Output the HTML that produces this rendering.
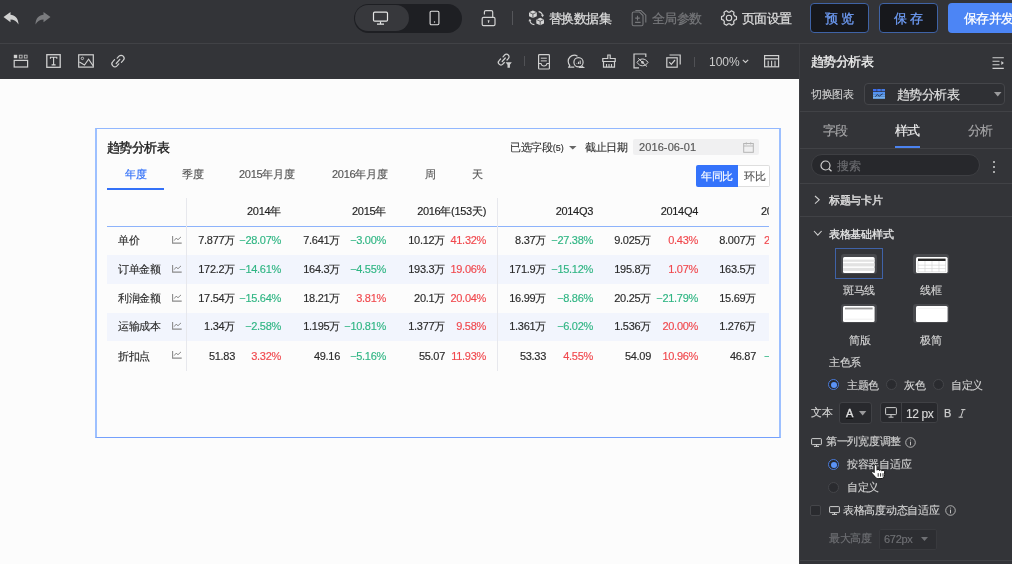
<!DOCTYPE html>
<html><head><meta charset="utf-8"><title>趋势分析表</title><style>
html,body{margin:0;padding:0;}
body{width:1012px;height:564px;position:relative;overflow:hidden;background:#333438;font-family:"Liberation Sans",sans-serif;}
.t{position:absolute;white-space:nowrap;line-height:1;will-change:transform;-webkit-text-stroke:0.15px currentColor;}
.b{position:absolute;}
svg.b{overflow:visible;}
</style></head><body>
<div class="b" style="left:0px;top:0px;width:1012px;height:43px;background:#333438"></div>
<div class="b" style="left:0px;top:43px;width:1012px;height:1px;background:#414246"></div>
<div class="b" style="left:0px;top:44px;width:800px;height:35px;background:#333438"></div>
<div class="b" style="left:0px;top:79px;width:799px;height:485px;background:#fcfcfc"></div>
<div class="b" style="left:799px;top:44px;width:1px;height:520px;background:#3c3d41"></div>
<div class="b" style="left:800px;top:44px;width:212px;height:520px;background:#333438"></div>
<svg class="b" style="left:3px;top:12px;" width="16" height="13" viewBox="0 0 16 13" fill="none"><path d="M0.5 5 L7.5 0 L7.5 2.8 C11.5 3 15.5 6 15.5 12.5 C13.5 9 11 7.6 7.5 7.6 L7.5 10.2 Z" fill="#d0d0d0"/></svg>
<svg class="b" style="left:35px;top:12px;" width="16" height="13" viewBox="0 0 16 13" fill="none"><g transform="translate(16 0) scale(-1 1)"><path d="M0.5 5 L7.5 0 L7.5 2.8 C11.5 3 15.5 6 15.5 12.5 C13.5 9 11 7.6 7.5 7.6 L7.5 10.2 Z" fill="#7b7c7f"/></g></svg>
<div class="b" style="left:353.5px;top:3.5px;width:108px;height:29px;background:#1e1f23;border-radius:14.5px"></div>
<div class="b" style="left:355px;top:5px;width:54px;height:26px;background:#37383c;border-radius:13px"></div>
<svg class="b" style="left:372px;top:11px;" width="17" height="14" viewBox="0 0 17 14" fill="none"><rect x="1.5" y="1.2" width="14" height="9" rx="1.2" stroke="#e6e6e6" stroke-width="1.2"/><path d="M8.5 10.5V13 M5 13.2H12" stroke="#e6e6e6" stroke-width="1.2"/></svg>
<svg class="b" style="left:429px;top:10px;" width="11" height="16" viewBox="0 0 11 16" fill="none"><rect x="1.1" y="1.2" width="8.8" height="13.6" rx="1.2" stroke="#e0e0e0" stroke-width="1.1"/><circle cx="5.5" cy="12" r="0.7" fill="#e0e0e0"/></svg>
<svg class="b" style="left:481px;top:10px;" width="15" height="16" viewBox="0 0 15 16" fill="none"><path d="M3.4 4.6 V2.1 Q3.4 0.7 4.8 0.7 H10.3 Q11.7 0.7 11.7 2.1 V7.2" stroke="#d2d2d2" stroke-width="1.2"/><rect x="1.2" y="7.4" width="12.8" height="8.2" rx="1.3" stroke="#d2d2d2" stroke-width="1.2"/><path d="M6.6 10.3 H8.6 L7.9 12.9 H7.3 Z" fill="#d2d2d2"/></svg>
<div class="b" style="left:512px;top:11px;width:1px;height:14px;background:#55565a"></div>
<svg class="b" style="left:528px;top:10px;" width="17" height="16" viewBox="0 0 17 16" fill="none"><path d="M4.9 0.5 L8.8 2.3 V6.2 L4.9 7.9 L1 6.2 V2.3Z" fill="#d6d6d6"/><path d="M1.3 2.4 L4.9 4 L8.5 2.4 M4.9 4 V7.7" stroke="#2a2b2f" stroke-width="0.7"/><path d="M12.2 7.8 L16 9.5 V13.4 L12.2 15.2 L8.3 13.4 V9.5Z" fill="#d6d6d6"/><path d="M8.6 9.6 L12.2 11.2 L15.7 9.6 M12.2 11.2 V15" stroke="#2a2b2f" stroke-width="0.7"/><path d="M10.6 1.6 C12.6 1.8 14 3.2 14.5 5.2" stroke="#d0d0d0" stroke-width="1.1"/><path d="M13 5 L14.7 7.2 L16 4.8Z" fill="#d0d0d0"/><path d="M6.4 14.6 C4.2 14.4 2.4 13 1.9 10.8" stroke="#d0d0d0" stroke-width="1.1"/><path d="M0.4 11.2 L1.8 8.8 L3.4 11Z" fill="#d0d0d0"/></svg>
<div class="t" style="left:549px;top:11.6px;font-size:13px;color:#dedede;font-weight:normal;letter-spacing:-0.6px;-webkit-text-stroke:0.25px #dedede">替换数据集</div>
<svg class="b" style="left:631px;top:10px;" width="16" height="16" viewBox="0 0 16 16" fill="none"><path d="M1.2 3.5 Q1.2 2 2.7 2 H8.5 L12 5.5 V14.3 Q12 15.8 10.5 15.8 H2.7 Q1.2 15.8 1.2 14.3 Z" stroke="#77787b" stroke-width="1.1"/><path d="M4.4 0.5 H10 L14.8 5.2 V12.6" stroke="#77787b" stroke-width="1.1"/><path d="M6.5 5.8V10.4 M4.2 8.1H8.8 M4.1 12.4H9.6" stroke="#77787b" stroke-width="1.1"/></svg>
<div class="t" style="left:652px;top:11.6px;font-size:13px;color:#77787b;font-weight:normal;letter-spacing:-0.6px;-webkit-text-stroke:0.2px #77787b">全局参数</div>
<svg class="b" style="left:721px;top:10px;" width="16" height="16" viewBox="0 0 16 16" fill="none"><path d="M15.46 6.55 L15.46 9.45 L13.51 10.11 L12.59 11.71 L12.99 13.74 L10.47 15.19 L8.92 13.83 L7.08 13.83 L5.53 15.19 L3.01 13.74 L3.41 11.71 L2.49 10.11 L0.54 9.45 L0.54 6.55 L2.49 5.89 L3.41 4.29 L3.01 2.26 L5.53 0.81 L7.08 2.17 L8.92 2.17 L10.47 0.81 L12.99 2.26 L12.59 4.29 L13.51 5.89 Z" stroke="#d8d8d8" stroke-width="1.2" stroke-linejoin="round"/><circle cx="8" cy="8" r="2.7" stroke="#d8d8d8" stroke-width="1.1"/></svg>
<div class="t" style="left:741.7px;top:11.6px;font-size:13px;color:#dedede;font-weight:normal;letter-spacing:-0.6px;-webkit-text-stroke:0.25px #dedede">页面设置</div>
<div class="b" style="left:810px;top:3px;width:59px;height:30px;box-sizing:border-box;background:#17181c;border:1px solid #3f63a6;border-radius:4px"></div>
<div class="t" style="left:825px;top:11.5px;font-size:13px;color:#6e9cf5;font-weight:normal;letter-spacing:-0.6px;letter-spacing:3px;-webkit-text-stroke:0.3px #6e9cf5">预览</div>
<div class="b" style="left:879px;top:3px;width:59px;height:30px;box-sizing:border-box;background:#17181c;border:1px solid #3f63a6;border-radius:4px"></div>
<div class="t" style="left:894.3px;top:11.5px;font-size:13px;color:#6e9cf5;font-weight:normal;letter-spacing:-0.6px;letter-spacing:3px;-webkit-text-stroke:0.3px #6e9cf5">保存</div>
<div class="b" style="left:948px;top:3px;width:80px;height:30px;background:#4c85f5;border-radius:4px"></div>
<div class="t" style="left:963.8px;top:11.5px;font-size:13px;color:#ffffff;font-weight:normal;letter-spacing:-0.6px;-webkit-text-stroke:0.3px #ffffff">保存并发布</div>
<svg class="b" style="left:13px;top:54px;" width="16" height="14" viewBox="0 0 16 14" fill="none"><rect x="0.8" y="0.8" width="3.4" height="3.4" fill="#d0d0d0"/><rect x="6.3" y="1.2" width="2.8" height="2.8" stroke="#bcbcbc" stroke-width="0.9"/><rect x="11.3" y="1.2" width="2.8" height="2.8" stroke="#bcbcbc" stroke-width="0.9"/><rect x="1.2" y="6.4" width="13.4" height="6.6" stroke="#d0d0d0" stroke-width="1.2"/></svg>
<svg class="b" style="left:46px;top:54px;" width="15" height="14" viewBox="0 0 15 14" fill="none"><rect x="0.8" y="0.7" width="13.4" height="12.6" stroke="#d0d0d0" stroke-width="1.3"/><path d="M4 3.3H11.2 M4.4 3V4.8 M10.8 3V4.8 M7.6 3.3V10.9 M5.6 10.9H9.6" stroke="#d8d8d8" stroke-width="1.1"/></svg>
<svg class="b" style="left:78px;top:54px;" width="16" height="14" viewBox="0 0 16 14" fill="none"><rect x="0.7" y="0.8" width="14.6" height="12.3" stroke="#d0d0d0" stroke-width="1.2"/><circle cx="4.4" cy="4.4" r="1.2" stroke="#d0d0d0" stroke-width="0.9"/><path d="M1.4 8 L6.5 11 L10.6 5.3 L15 11.6" stroke="#d0d0d0" stroke-width="1.1"/></svg>
<svg class="b" style="left:110px;top:54px;" width="16" height="14" viewBox="0 0 16 14" fill="none"><path d="M6.2 9.5 L9.8 5.3" stroke="#d0d0d0" stroke-width="1.2" stroke-linecap="round"/><path d="M7.2 4.2 L9 2.2 C10.2 1 12 1 13.2 2.2 C14.4 3.4 14.4 5.2 13.2 6.4 L11.4 8.4" stroke="#d0d0d0" stroke-width="1.2" stroke-linecap="round"/><path d="M8.8 9.8 L7 11.8 C5.8 13 4 13 2.8 11.8 C1.6 10.6 1.6 8.8 2.8 7.6 L4.6 5.6" stroke="#d0d0d0" stroke-width="1.2" stroke-linecap="round"/></svg>
<svg class="b" style="left:497px;top:53px;" width="16" height="15" viewBox="0 0 16 15" fill="none"><path d="M5.2 8.5 L8.3 5" stroke="#d0d0d0" stroke-width="1.2" stroke-linecap="round"/><path d="M6 3.8 L7.6 2 C8.7 0.9 10.3 0.9 11.3 2 C12.3 3 12.3 4.6 11.3 5.6 L10 7" stroke="#d0d0d0" stroke-width="1.2" stroke-linecap="round"/><path d="M7.3 9.5 L5.8 11.2 C4.8 12.3 3.2 12.3 2.1 11.2 C1.1 10.2 1.1 8.6 2.1 7.6 L3.6 6" stroke="#d0d0d0" stroke-width="1.2" stroke-linecap="round"/><path d="M8.6 9.2 H14.8 L12.9 11.8 V14.8 H10.5 V11.8 Z" fill="#d0d0d0"/></svg>
<div class="b" style="left:523.5px;top:56px;width:1px;height:10px;background:#505155"></div>
<svg class="b" style="left:538px;top:53.5px;" width="12" height="16" viewBox="0 0 12 16" fill="none"><rect x="0.6" y="0.6" width="10.8" height="14.4" rx="0.8" stroke="#d0d0d0" stroke-width="1.2"/><path d="M2.8 4.2H8.8 M2.8 6.9H8.8" stroke="#d0d0d0" stroke-width="1"/><path d="M0.8 9.5 H3 C3.3 11.3 4.3 12 6 12 C7.7 12 8.7 11.3 9 9.5 H11.2" stroke="#d0d0d0" stroke-width="1.1"/></svg>
<svg class="b" style="left:567px;top:54px;" width="18" height="14" viewBox="0 0 18 14" fill="none"><path d="M10.5 2.2 C9.6 1.6 8.5 1.2 7.3 1.2 C3.9 1.2 1.2 3.9 1.2 7.2 C1.2 8.8 1.8 10.2 2.8 11.3 L1.8 13.2 H7.3" stroke="#d0d0d0" stroke-width="1.2"/><circle cx="11.5" cy="8.2" r="4.6" stroke="#d0d0d0" stroke-width="1.2"/><path d="M9.8 9.5V10 M11.5 7.8V10 M13.2 6.5V10" stroke="#d0d0d0" stroke-width="1.1"/><path d="M14.5 12 L16.5 13.5 H12" stroke="#d0d0d0" stroke-width="1.1"/></svg>
<svg class="b" style="left:601px;top:54px;" width="16" height="14" viewBox="0 0 16 14" fill="none"><path d="M6.8 1 H9.2 V4.5 H14.2 V7.5 H1.8 V4.5 H6.8Z" stroke="#d0d0d0" stroke-width="1.2"/><path d="M2.5 7.5 V13.2 H13.5 V7.5" stroke="#d0d0d0" stroke-width="1.2"/><path d="M5.5 10V13 M8 10V13 M10.5 10V13" stroke="#d0d0d0" stroke-width="1.1"/></svg>
<svg class="b" style="left:633px;top:53px;" width="16" height="16" viewBox="0 0 16 16" fill="none"><path d="M12.8 3.9 V1 H1 V14.8 H6" stroke="#d0d0d0" stroke-width="1.2"/><path d="M4 9.4 C5.4 7.2 7.3 6 9.5 6 C11.7 6 13.6 7.2 15 9.4 C13.6 11.6 11.7 12.8 9.5 12.8 C7.3 12.8 5.4 11.6 4 9.4Z" stroke="#d0d0d0" stroke-width="1"/><circle cx="9.5" cy="9.4" r="1.3" fill="#d0d0d0"/><path d="M5.2 5.3 L14 13.6" stroke="#d0d0d0" stroke-width="1"/></svg>
<svg class="b" style="left:666px;top:54px;" width="16" height="14" viewBox="0 0 16 14" fill="none"><rect x="0.8" y="3.8" width="10.4" height="9.4" stroke="#d0d0d0" stroke-width="1.2"/><path d="M3.5 1 H14.2 V10.5" stroke="#d0d0d0" stroke-width="1.2"/><path d="M3.3 8.2 L5.3 10.3 L9 6" stroke="#d0d0d0" stroke-width="1.2"/></svg>
<div class="b" style="left:693.5px;top:56.5px;width:1px;height:10px;background:#505155"></div>
<div class="t" style="left:709px;top:55.5px;font-size:12px;color:#cccccc;font-weight:normal;letter-spacing:-0.4px;-webkit-text-stroke:0;letter-spacing:0">100%</div>
<svg class="b" style="left:742px;top:59px;" width="7" height="5" viewBox="0 0 7 5" fill="none"><path d="M0.8 0.8 L3.5 3.5 L6.2 0.8" stroke="#cfcfcf" stroke-width="1.1"/></svg>
<svg class="b" style="left:764px;top:55px;" width="16" height="13" viewBox="0 0 16 13" fill="none"><rect x="0.6" y="0.6" width="14" height="11.2" stroke="#d0d0d0" stroke-width="1.2"/><path d="M0.8 3.8H14.4" stroke="#d0d0d0" stroke-width="1.3"/><path d="M4.2 5.8V11.6 M7.6 5.8V11.6 M11 5.8V11.6" stroke="#d0d0d0" stroke-width="1.1"/></svg>
<div class="b" style="left:95px;top:128.2px;width:686px;height:310px;box-sizing:border-box;border-style:solid;border-color:#92b8ff #9dc0ff #74a0fc #9dc0ff;border-width:1.8px 2px 1.3px 2px;background:#fcfcfc"></div>
<div class="t" style="left:106.5px;top:141px;font-size:13px;color:#1f1f1f;font-weight:normal;letter-spacing:-0.6px;-webkit-text-stroke:0.4px #1f1f1f">趋势分析表</div>
<div class="t" style="left:125px;top:169px;font-size:11px;color:#2f6ef8;font-weight:normal;letter-spacing:-0.3px;">年度</div>
<div class="b" style="left:106.5px;top:187.5px;width:57.5px;height:2px;background:#3471f8"></div>
<div class="t" style="left:182.4px;top:169px;font-size:11px;color:#555;font-weight:normal;letter-spacing:-0.3px;">季度</div>
<div class="t" style="left:239.4px;top:169px;font-size:11px;color:#555;font-weight:normal;letter-spacing:-0.3px;">2015年月度</div>
<div class="t" style="left:332px;top:169px;font-size:11px;color:#555;font-weight:normal;letter-spacing:-0.3px;">2016年月度</div>
<div class="t" style="left:425px;top:169px;font-size:11px;color:#555;font-weight:normal;letter-spacing:-0.3px;">周</div>
<div class="t" style="left:471.6px;top:169px;font-size:11px;color:#555;font-weight:normal;letter-spacing:-0.3px;">天</div>
<div class="t" style="left:509.5px;top:142px;font-size:11px;color:#333;font-weight:normal;letter-spacing:-0.3px;">已选字段<span style='font-size:9px;letter-spacing:0'>(5)</span></div>
<svg class="b" style="left:568.5px;top:145.5px;" width="8" height="4" viewBox="0 0 8 4" fill="none"><path d="M0 0H7.5L3.75 3.5Z" fill="#666"/></svg>
<div class="t" style="left:584.5px;top:142px;font-size:11px;color:#333;font-weight:normal;letter-spacing:-0.3px;">截止日期</div>
<div class="b" style="left:633px;top:139px;width:126px;height:15.5px;background:#f0f0f1;border-radius:2px"></div>
<div class="t" style="left:639px;top:142px;font-size:11px;color:#555;font-weight:normal;letter-spacing:-0.3px;letter-spacing:0.1px">2016-06-01</div>
<svg class="b" style="left:742.5px;top:141.5px;" width="11" height="11" viewBox="0 0 11 11" fill="none"><rect x="0.7" y="1.5" width="9.6" height="8.8" stroke="#b5b5b5" stroke-width="1"/><path d="M0.7 4H10.3 M3.3 0.3V2.5 M7.7 0.3V2.5" stroke="#b5b5b5" stroke-width="0.9"/></svg>
<div class="b" style="left:696.3px;top:165px;width:42.1px;height:21.7px;background:#3473fb;border-radius:2px 0 0 2px"></div>
<div class="b" style="left:738.4px;top:165px;width:31.2px;height:21.7px;box-sizing:border-box;border:1px solid #dedede;border-left:none;border-radius:0 2px 2px 0;background:#fff"></div>
<div class="t" style="left:701.4px;top:171px;font-size:11px;color:#ffffff;font-weight:normal;letter-spacing:-0.3px;">年同比</div>
<div class="t" style="left:743.6px;top:171px;font-size:11px;color:#555;font-weight:normal;letter-spacing:-0.3px;">环比</div>
<div class="b" style="left:107px;top:196px;width:662px;height:175px;overflow:hidden">
<div class="b" style="left:0px;top:59.0px;width:700px;height:28.600000000000023px;background:#f2f5fd"></div>
<div class="b" style="left:0px;top:116.89999999999998px;width:700px;height:27.80000000000001px;background:#f2f5fd"></div>
<div class="b" style="left:0px;top:30px;width:700px;height:1.2px;background:#8db3fb"></div>
<div class="b" style="left:79px;top:1.5px;width:1px;height:173.5px;background:#e7e8ed"></div>
<div class="b" style="left:389.5px;top:1.5px;width:1px;height:173.5px;background:#e7e8ed"></div>
<div class="t" style="left:-26.19999999999999px;width:200px;text-align:right;top:10.300000000000011px;font-size:11px;color:#1f1f1f;letter-spacing:-0.3px;margin-right:-0.3px;">2014年</div>
<div class="t" style="left:78.80000000000001px;width:200px;text-align:right;top:10.300000000000011px;font-size:11px;color:#1f1f1f;letter-spacing:-0.3px;margin-right:-0.3px;">2015年</div>
<div class="t" style="left:179.3px;width:200px;text-align:right;top:10.300000000000011px;font-size:11px;color:#1f1f1f;letter-spacing:-0.3px;margin-right:-0.3px;">2016年(153天)</div>
<div class="t" style="left:285.5px;width:200px;text-align:right;top:10.300000000000011px;font-size:11px;color:#1f1f1f;letter-spacing:-0.3px;margin-right:-0.3px;">2014Q3</div>
<div class="t" style="left:390.79999999999995px;width:200px;text-align:right;top:10.300000000000011px;font-size:11px;color:#1f1f1f;letter-spacing:-0.3px;margin-right:-0.3px;">2014Q4</div>
<div class="t" style="left:653.5px;top:10.300000000000011px;font-size:11px;color:#1f1f1f;letter-spacing:-0.3px;">2015Q1</div>
<div class="t" style="left:10.5px;top:39.400000000000006px;font-size:11px;color:#2b2b2b;letter-spacing:-0.3px;">单价</div>
<svg class="b" style="left:65px;top:39.900000000000006px" width="10" height="8" viewBox="0 0 10 8" fill="none"><path d="M0.6 0V7.1H9.7" stroke="#8a8a8a" stroke-width="1.1"/><path d="M2.2 4.6 L4.1 2.2 L6 3.7 L9 0.9" stroke="#8a8a8a" stroke-width="1"/></svg>
<div class="t" style="left:-72.4px;width:200px;text-align:right;top:39.400000000000006px;font-size:11px;color:#2b2b2b;letter-spacing:-0.3px;margin-right:-0.3px;">7.877万</div>
<div class="t" style="left:-26.19999999999999px;width:200px;text-align:right;top:39.400000000000006px;font-size:11px;color:#2fb583;letter-spacing:-0.3px;margin-right:-0.3px;">&minus;28.07%</div>
<div class="t" style="left:32.80000000000001px;width:200px;text-align:right;top:39.400000000000006px;font-size:11px;color:#2b2b2b;letter-spacing:-0.3px;margin-right:-0.3px;">7.641万</div>
<div class="t" style="left:78.80000000000001px;width:200px;text-align:right;top:39.400000000000006px;font-size:11px;color:#2fb583;letter-spacing:-0.3px;margin-right:-0.3px;">&minus;3.00%</div>
<div class="t" style="left:137.5px;width:200px;text-align:right;top:39.400000000000006px;font-size:11px;color:#2b2b2b;letter-spacing:-0.3px;margin-right:-0.3px;">10.12万</div>
<div class="t" style="left:179.3px;width:200px;text-align:right;top:39.400000000000006px;font-size:11px;color:#f0484d;letter-spacing:-0.3px;margin-right:-0.3px;">41.32%</div>
<div class="t" style="left:238.89999999999998px;width:200px;text-align:right;top:39.400000000000006px;font-size:11px;color:#2b2b2b;letter-spacing:-0.3px;margin-right:-0.3px;">8.37万</div>
<div class="t" style="left:285.5px;width:200px;text-align:right;top:39.400000000000006px;font-size:11px;color:#2fb583;letter-spacing:-0.3px;margin-right:-0.3px;">&minus;27.38%</div>
<div class="t" style="left:344.20000000000005px;width:200px;text-align:right;top:39.400000000000006px;font-size:11px;color:#2b2b2b;letter-spacing:-0.3px;margin-right:-0.3px;">9.025万</div>
<div class="t" style="left:390.79999999999995px;width:200px;text-align:right;top:39.400000000000006px;font-size:11px;color:#f0484d;letter-spacing:-0.3px;margin-right:-0.3px;">0.43%</div>
<div class="t" style="left:449.4px;width:200px;text-align:right;top:39.400000000000006px;font-size:11px;color:#2b2b2b;letter-spacing:-0.3px;margin-right:-0.3px;">8.007万</div>
<div class="t" style="left:656.8px;top:39.400000000000006px;font-size:11px;color:#f0484d;letter-spacing:-0.3px;">24.13%</div>
<div class="t" style="left:10.5px;top:68.0px;font-size:11px;color:#2b2b2b;letter-spacing:-0.3px;">订单金额</div>
<svg class="b" style="left:65px;top:68.5px" width="10" height="8" viewBox="0 0 10 8" fill="none"><path d="M0.6 0V7.1H9.7" stroke="#8a8a8a" stroke-width="1.1"/><path d="M2.2 4.6 L4.1 2.2 L6 3.7 L9 0.9" stroke="#8a8a8a" stroke-width="1"/></svg>
<div class="t" style="left:-72.4px;width:200px;text-align:right;top:68.0px;font-size:11px;color:#2b2b2b;letter-spacing:-0.3px;margin-right:-0.3px;">172.2万</div>
<div class="t" style="left:-26.19999999999999px;width:200px;text-align:right;top:68.0px;font-size:11px;color:#2fb583;letter-spacing:-0.3px;margin-right:-0.3px;">&minus;14.61%</div>
<div class="t" style="left:32.80000000000001px;width:200px;text-align:right;top:68.0px;font-size:11px;color:#2b2b2b;letter-spacing:-0.3px;margin-right:-0.3px;">164.3万</div>
<div class="t" style="left:78.80000000000001px;width:200px;text-align:right;top:68.0px;font-size:11px;color:#2fb583;letter-spacing:-0.3px;margin-right:-0.3px;">&minus;4.55%</div>
<div class="t" style="left:137.5px;width:200px;text-align:right;top:68.0px;font-size:11px;color:#2b2b2b;letter-spacing:-0.3px;margin-right:-0.3px;">193.3万</div>
<div class="t" style="left:179.3px;width:200px;text-align:right;top:68.0px;font-size:11px;color:#f0484d;letter-spacing:-0.3px;margin-right:-0.3px;">19.06%</div>
<div class="t" style="left:238.89999999999998px;width:200px;text-align:right;top:68.0px;font-size:11px;color:#2b2b2b;letter-spacing:-0.3px;margin-right:-0.3px;">171.9万</div>
<div class="t" style="left:285.5px;width:200px;text-align:right;top:68.0px;font-size:11px;color:#2fb583;letter-spacing:-0.3px;margin-right:-0.3px;">&minus;15.12%</div>
<div class="t" style="left:344.20000000000005px;width:200px;text-align:right;top:68.0px;font-size:11px;color:#2b2b2b;letter-spacing:-0.3px;margin-right:-0.3px;">195.8万</div>
<div class="t" style="left:390.79999999999995px;width:200px;text-align:right;top:68.0px;font-size:11px;color:#f0484d;letter-spacing:-0.3px;margin-right:-0.3px;">1.07%</div>
<div class="t" style="left:449.4px;width:200px;text-align:right;top:68.0px;font-size:11px;color:#2b2b2b;letter-spacing:-0.3px;margin-right:-0.3px;">163.5万</div>
<div class="t" style="left:10.5px;top:97.0px;font-size:11px;color:#2b2b2b;letter-spacing:-0.3px;">利润金额</div>
<svg class="b" style="left:65px;top:97.5px" width="10" height="8" viewBox="0 0 10 8" fill="none"><path d="M0.6 0V7.1H9.7" stroke="#8a8a8a" stroke-width="1.1"/><path d="M2.2 4.6 L4.1 2.2 L6 3.7 L9 0.9" stroke="#8a8a8a" stroke-width="1"/></svg>
<div class="t" style="left:-72.4px;width:200px;text-align:right;top:97.0px;font-size:11px;color:#2b2b2b;letter-spacing:-0.3px;margin-right:-0.3px;">17.54万</div>
<div class="t" style="left:-26.19999999999999px;width:200px;text-align:right;top:97.0px;font-size:11px;color:#2fb583;letter-spacing:-0.3px;margin-right:-0.3px;">&minus;15.64%</div>
<div class="t" style="left:32.80000000000001px;width:200px;text-align:right;top:97.0px;font-size:11px;color:#2b2b2b;letter-spacing:-0.3px;margin-right:-0.3px;">18.21万</div>
<div class="t" style="left:78.80000000000001px;width:200px;text-align:right;top:97.0px;font-size:11px;color:#f0484d;letter-spacing:-0.3px;margin-right:-0.3px;">3.81%</div>
<div class="t" style="left:137.5px;width:200px;text-align:right;top:97.0px;font-size:11px;color:#2b2b2b;letter-spacing:-0.3px;margin-right:-0.3px;">20.1万</div>
<div class="t" style="left:179.3px;width:200px;text-align:right;top:97.0px;font-size:11px;color:#f0484d;letter-spacing:-0.3px;margin-right:-0.3px;">20.04%</div>
<div class="t" style="left:238.89999999999998px;width:200px;text-align:right;top:97.0px;font-size:11px;color:#2b2b2b;letter-spacing:-0.3px;margin-right:-0.3px;">16.99万</div>
<div class="t" style="left:285.5px;width:200px;text-align:right;top:97.0px;font-size:11px;color:#2fb583;letter-spacing:-0.3px;margin-right:-0.3px;">&minus;8.86%</div>
<div class="t" style="left:344.20000000000005px;width:200px;text-align:right;top:97.0px;font-size:11px;color:#2b2b2b;letter-spacing:-0.3px;margin-right:-0.3px;">20.25万</div>
<div class="t" style="left:390.79999999999995px;width:200px;text-align:right;top:97.0px;font-size:11px;color:#2fb583;letter-spacing:-0.3px;margin-right:-0.3px;">&minus;21.79%</div>
<div class="t" style="left:449.4px;width:200px;text-align:right;top:97.0px;font-size:11px;color:#2b2b2b;letter-spacing:-0.3px;margin-right:-0.3px;">15.69万</div>
<div class="t" style="left:10.5px;top:125.39999999999998px;font-size:11px;color:#2b2b2b;letter-spacing:-0.3px;">运输成本</div>
<svg class="b" style="left:65px;top:125.89999999999998px" width="10" height="8" viewBox="0 0 10 8" fill="none"><path d="M0.6 0V7.1H9.7" stroke="#8a8a8a" stroke-width="1.1"/><path d="M2.2 4.6 L4.1 2.2 L6 3.7 L9 0.9" stroke="#8a8a8a" stroke-width="1"/></svg>
<div class="t" style="left:-72.4px;width:200px;text-align:right;top:125.39999999999998px;font-size:11px;color:#2b2b2b;letter-spacing:-0.3px;margin-right:-0.3px;">1.34万</div>
<div class="t" style="left:-26.19999999999999px;width:200px;text-align:right;top:125.39999999999998px;font-size:11px;color:#2fb583;letter-spacing:-0.3px;margin-right:-0.3px;">&minus;2.58%</div>
<div class="t" style="left:32.80000000000001px;width:200px;text-align:right;top:125.39999999999998px;font-size:11px;color:#2b2b2b;letter-spacing:-0.3px;margin-right:-0.3px;">1.195万</div>
<div class="t" style="left:78.80000000000001px;width:200px;text-align:right;top:125.39999999999998px;font-size:11px;color:#2fb583;letter-spacing:-0.3px;margin-right:-0.3px;">&minus;10.81%</div>
<div class="t" style="left:137.5px;width:200px;text-align:right;top:125.39999999999998px;font-size:11px;color:#2b2b2b;letter-spacing:-0.3px;margin-right:-0.3px;">1.377万</div>
<div class="t" style="left:179.3px;width:200px;text-align:right;top:125.39999999999998px;font-size:11px;color:#f0484d;letter-spacing:-0.3px;margin-right:-0.3px;">9.58%</div>
<div class="t" style="left:238.89999999999998px;width:200px;text-align:right;top:125.39999999999998px;font-size:11px;color:#2b2b2b;letter-spacing:-0.3px;margin-right:-0.3px;">1.361万</div>
<div class="t" style="left:285.5px;width:200px;text-align:right;top:125.39999999999998px;font-size:11px;color:#2fb583;letter-spacing:-0.3px;margin-right:-0.3px;">&minus;6.02%</div>
<div class="t" style="left:344.20000000000005px;width:200px;text-align:right;top:125.39999999999998px;font-size:11px;color:#2b2b2b;letter-spacing:-0.3px;margin-right:-0.3px;">1.536万</div>
<div class="t" style="left:390.79999999999995px;width:200px;text-align:right;top:125.39999999999998px;font-size:11px;color:#f0484d;letter-spacing:-0.3px;margin-right:-0.3px;">20.00%</div>
<div class="t" style="left:449.4px;width:200px;text-align:right;top:125.39999999999998px;font-size:11px;color:#2b2b2b;letter-spacing:-0.3px;margin-right:-0.3px;">1.276万</div>
<div class="t" style="left:10.5px;top:154.8px;font-size:11px;color:#2b2b2b;letter-spacing:-0.3px;">折扣点</div>
<svg class="b" style="left:65px;top:155.3px" width="10" height="8" viewBox="0 0 10 8" fill="none"><path d="M0.6 0V7.1H9.7" stroke="#8a8a8a" stroke-width="1.1"/><path d="M2.2 4.6 L4.1 2.2 L6 3.7 L9 0.9" stroke="#8a8a8a" stroke-width="1"/></svg>
<div class="t" style="left:-72.4px;width:200px;text-align:right;top:154.8px;font-size:11px;color:#2b2b2b;letter-spacing:-0.3px;margin-right:-0.3px;">51.83</div>
<div class="t" style="left:-26.19999999999999px;width:200px;text-align:right;top:154.8px;font-size:11px;color:#f0484d;letter-spacing:-0.3px;margin-right:-0.3px;">3.32%</div>
<div class="t" style="left:32.80000000000001px;width:200px;text-align:right;top:154.8px;font-size:11px;color:#2b2b2b;letter-spacing:-0.3px;margin-right:-0.3px;">49.16</div>
<div class="t" style="left:78.80000000000001px;width:200px;text-align:right;top:154.8px;font-size:11px;color:#2fb583;letter-spacing:-0.3px;margin-right:-0.3px;">&minus;5.16%</div>
<div class="t" style="left:137.5px;width:200px;text-align:right;top:154.8px;font-size:11px;color:#2b2b2b;letter-spacing:-0.3px;margin-right:-0.3px;">55.07</div>
<div class="t" style="left:179.3px;width:200px;text-align:right;top:154.8px;font-size:11px;color:#f0484d;letter-spacing:-0.3px;margin-right:-0.3px;">11.93%</div>
<div class="t" style="left:238.89999999999998px;width:200px;text-align:right;top:154.8px;font-size:11px;color:#2b2b2b;letter-spacing:-0.3px;margin-right:-0.3px;">53.33</div>
<div class="t" style="left:285.5px;width:200px;text-align:right;top:154.8px;font-size:11px;color:#f0484d;letter-spacing:-0.3px;margin-right:-0.3px;">4.55%</div>
<div class="t" style="left:344.20000000000005px;width:200px;text-align:right;top:154.8px;font-size:11px;color:#2b2b2b;letter-spacing:-0.3px;margin-right:-0.3px;">54.09</div>
<div class="t" style="left:390.79999999999995px;width:200px;text-align:right;top:154.8px;font-size:11px;color:#f0484d;letter-spacing:-0.3px;margin-right:-0.3px;">10.96%</div>
<div class="t" style="left:449.4px;width:200px;text-align:right;top:154.8px;font-size:11px;color:#2b2b2b;letter-spacing:-0.3px;margin-right:-0.3px;">46.87</div>
<div class="t" style="left:656.8px;top:154.8px;font-size:11px;color:#2fb583;letter-spacing:-0.3px;">&minus;13.35%</div>
</div>
<div class="t" style="left:810.5px;top:55px;font-size:13px;color:#ececec;font-weight:normal;letter-spacing:-0.6px;-webkit-text-stroke:0.35px #ececec">趋势分析表</div>
<svg class="b" style="left:991.5px;top:57px;" width="14" height="13" viewBox="0 0 14 13" fill="none"><path d="M0.5 0.7H11.8 M0.5 4.3H7.5 M0.5 7.8H7.5 M0.5 11.4H11.8" stroke="#d0d0d0" stroke-width="1.1"/><path d="M9.3 4.1 L11.9 6 L9.3 7.9Z" fill="#d0d0d0"/></svg>
<div class="t" style="left:810.5px;top:88.5px;font-size:11px;color:#cdcdcd;font-weight:normal;letter-spacing:-0.3px;">切换图表</div>
<div class="b" style="left:864.3px;top:83.3px;width:140.5px;height:21.5px;box-sizing:border-box;border:1px solid #45464a;border-radius:4px;background:#2f3034"></div>
<svg class="b" style="left:873px;top:89px;" width="12" height="10" viewBox="0 0 12 10" fill="none"><rect x="0" y="0" width="3.6" height="2.3" fill="#3b6cf0"/><rect x="4.2" y="0" width="3.6" height="2.3" fill="#3f74ee"/><rect x="8.4" y="0" width="3.6" height="2.3" fill="#4479e0"/><rect x="0" y="3" width="12" height="2.3" fill="#5393f1"/><rect x="0" y="5.3" width="12" height="2.3" fill="#63a3f3"/><rect x="0" y="7.6" width="12" height="2.2" fill="#74b2f5"/><path d="M2.2 7.6 L4.3 5.6 L6.2 7.2 L9.6 4.8" stroke="#1d2f55" stroke-width="0.9"/></svg>
<div class="t" style="left:896.5px;top:88px;font-size:13px;color:#e0e0e0;font-weight:normal;letter-spacing:-0.6px;">趋势分析表</div>
<svg class="b" style="left:993.5px;top:91.5px;" width="8" height="5" viewBox="0 0 8 5" fill="none"><path d="M0 0H7.5L3.75 4.5Z" fill="#9a9a9c"/></svg>
<div class="b" style="left:800px;top:111px;width:212px;height:1px;background:#414246"></div>
<div class="t" style="left:823.2px;top:124px;font-size:13px;color:#a5a5a7;font-weight:normal;letter-spacing:-0.6px;">字段</div>
<div class="t" style="left:895px;top:124px;font-size:13px;color:#f2f2f2;font-weight:normal;letter-spacing:-0.6px;">样式</div>
<div class="t" style="left:967.7px;top:124px;font-size:13px;color:#a5a5a7;font-weight:normal;letter-spacing:-0.6px;">分析</div>
<div class="b" style="left:800px;top:147.5px;width:212px;height:1px;background:#414246"></div>
<div class="b" style="left:895px;top:146px;width:25px;height:2px;background:#4b83f0"></div>
<div class="b" style="left:810.5px;top:154.2px;width:169.2px;height:22px;box-sizing:border-box;border:1px solid #3e3f43;border-radius:11px;background:#27282c"></div>
<svg class="b" style="left:819.5px;top:160px;" width="13" height="12" viewBox="0 0 13 12" fill="none"><circle cx="5.5" cy="5.5" r="4.5" stroke="#cfcfcf" stroke-width="1.2"/><path d="M8.8 8.8 L11.5 11.3" stroke="#cfcfcf" stroke-width="1.3"/></svg>
<div class="t" style="left:837.3px;top:160px;font-size:12px;color:#6b6c70;font-weight:normal;letter-spacing:-0.4px;">搜索</div>
<div class="b" style="left:993.3px;top:160.5px;width:2px;height:2px;background:#cfcfcf;border-radius:1px"></div>
<div class="b" style="left:993.3px;top:165.5px;width:2px;height:2px;background:#cfcfcf;border-radius:1px"></div>
<div class="b" style="left:993.3px;top:170.5px;width:2px;height:2px;background:#cfcfcf;border-radius:1px"></div>
<div class="b" style="left:800px;top:183px;width:212px;height:1px;background:#414246"></div>
<svg class="b" style="left:814px;top:195px;" width="7" height="10" viewBox="0 0 7 10" fill="none"><path d="M1 1 L5.2 4.8 L1 8.6" stroke="#cfcfcf" stroke-width="1.1"/></svg>
<div class="t" style="left:828.7px;top:194.5px;font-size:11px;color:#e6e6e6;font-weight:normal;letter-spacing:-0.3px;-webkit-text-stroke:0.3px #e6e6e6">标题与卡片</div>
<div class="b" style="left:800px;top:216.3px;width:212px;height:1px;background:#414246"></div>
<svg class="b" style="left:812.5px;top:229.5px;" width="10" height="7" viewBox="0 0 10 7" fill="none"><path d="M1 1 L4.8 5.2 L8.6 1" stroke="#cfcfcf" stroke-width="1.1"/></svg>
<div class="t" style="left:828.7px;top:228.8px;font-size:11px;color:#e6e6e6;font-weight:normal;letter-spacing:-0.3px;-webkit-text-stroke:0.3px #e6e6e6">表格基础样式</div>
<div class="b" style="left:835.2px;top:248.2px;width:47.6px;height:30.4px;box-sizing:border-box;border:1px solid #3f62a8"></div>
<div class="b" style="left:840.8px;top:254.3px;width:36.2px;height:19.4px;background:#48494d;border-radius:3px"></div>
<svg class="b" style="left:843.3px;top:256.7px" width="31.6" height="16" viewBox="0 0 31.6 16">
<rect x="0" y="0" width="31.6" height="16" rx="1.5" fill="#ffffff"/>
<rect x="0" y="2.6" width="31.6" height="2.2" fill="#e2e2e2"/><rect x="0" y="6.2" width="31.6" height="3.2" fill="#e2e2e2"/><rect x="0" y="10.9" width="31.6" height="3" fill="#e2e2e2"/>
</svg>
<div class="b" style="left:913px;top:254.3px;width:36.2px;height:19.4px;background:#48494d;border-radius:3px"></div>
<svg class="b" style="left:915.5px;top:256.7px" width="31.6" height="16" viewBox="0 0 31.6 16">
<rect x="0" y="0" width="31.6" height="16" rx="1.5" fill="#ffffff"/>
<rect x="2" y="1.6" width="27.6" height="2.4" fill="#2a2a2a"/>
<path d="M2 4V15 M29.6 4V15 M2 8.2H29.6 M2 11.6H29.6 M2 14.8H29.6 M9 4V15 M16 4V15 M23 4V15" stroke="#cfcfcf" stroke-width="0.6"/>
</svg>
<div class="b" style="left:840.8px;top:303.6px;width:36.2px;height:19.4px;background:#48494d;border-radius:3px"></div>
<svg class="b" style="left:843.3px;top:306.0px" width="31.6" height="16" viewBox="0 0 31.6 16">
<rect x="0" y="0" width="31.6" height="16" rx="1.5" fill="#ffffff"/>
<rect x="2" y="1.6" width="27.6" height="1.8" fill="#9a9a9a"/><path d="M2 13.2H29.6" stroke="#e6e6e6" stroke-width="0.6"/>
</svg>
<div class="b" style="left:913px;top:303.6px;width:36.2px;height:19.4px;background:#48494d;border-radius:3px"></div>
<svg class="b" style="left:915.5px;top:306.0px" width="31.6" height="16" viewBox="0 0 31.6 16">
<rect x="0" y="0" width="31.6" height="16" rx="1.5" fill="#ffffff"/>
<path d="M2 2.4H29.6" stroke="#ececec" stroke-width="0.6"/>
</svg>
<div class="t" style="left:843px;top:285px;font-size:11px;color:#d2d2d2;font-weight:normal;letter-spacing:-0.3px;">斑马线</div>
<div class="t" style="left:920.4px;top:285px;font-size:11px;color:#d2d2d2;font-weight:normal;letter-spacing:-0.3px;">线框</div>
<div class="t" style="left:848.9px;top:335px;font-size:11px;color:#d2d2d2;font-weight:normal;letter-spacing:-0.3px;">简版</div>
<div class="t" style="left:920.4px;top:335px;font-size:11px;color:#d2d2d2;font-weight:normal;letter-spacing:-0.3px;">极简</div>
<div class="t" style="left:828.7px;top:357.4px;font-size:11px;color:#d2d2d2;font-weight:normal;letter-spacing:-0.3px;">主色系</div>
<div class="b" style="left:828.3px;top:379.3px;width:11px;height:11px;box-sizing:border-box;border:0.8px solid #4a7ad8;border-radius:50%;background:#27282c"></div>
<div class="b" style="left:830.5999999999999px;top:381.6px;width:6.4px;height:6.4px;background:#5b93f7;border-radius:50%"></div>
<div class="t" style="left:846.5px;top:380px;font-size:11px;color:#d2d2d2;font-weight:normal;letter-spacing:-0.3px;">主题色</div>
<div class="b" style="left:885.9px;top:379.3px;width:11px;height:11px;box-sizing:border-box;border:1px solid #45464a;border-radius:50%;background:#2a2b2f"></div>
<div class="t" style="left:904.1px;top:380px;font-size:11px;color:#d2d2d2;font-weight:normal;letter-spacing:-0.3px;">灰色</div>
<div class="b" style="left:933px;top:379.3px;width:11px;height:11px;box-sizing:border-box;border:1px solid #45464a;border-radius:50%;background:#2a2b2f"></div>
<div class="t" style="left:951.2px;top:380px;font-size:11px;color:#d2d2d2;font-weight:normal;letter-spacing:-0.3px;">自定义</div>
<div class="t" style="left:810.9px;top:407.2px;font-size:11px;color:#d2d2d2;font-weight:normal;letter-spacing:-0.3px;">文本</div>
<div class="b" style="left:839.2px;top:402px;width:33.1px;height:21.5px;box-sizing:border-box;border:1px solid #404145;border-radius:3px;background:#28292d"></div>
<div class="t" style="left:845.6px;top:407.6px;font-size:11px;color:#e0e0e0;font-weight:normal;letter-spacing:-0.3px;-webkit-text-stroke:0.3px #e0e0e0">A</div>
<div class="b" style="left:845.5px;top:418px;width:7.5px;height:1.3px;background:#111"></div>
<svg class="b" style="left:859.3px;top:410.5px;" width="8" height="5" viewBox="0 0 8 5" fill="none"><path d="M0 0H7.3L3.65 4.6Z" fill="#9a9a9c"/></svg>
<div class="b" style="left:880.2px;top:402px;width:57.4px;height:21.2px;box-sizing:border-box;border:1px solid #404145;border-radius:3px;background:#28292d"></div>
<div class="b" style="left:901.3px;top:402px;width:1px;height:21.2px;background:#404145"></div>
<svg class="b" style="left:884.5px;top:407px;" width="12" height="11" viewBox="0 0 12 11" fill="none"><rect x="0.6" y="0.6" width="10.8" height="7" rx="0.8" stroke="#cfcfcf" stroke-width="1"/><path d="M6 7.8V10 M3.5 10.2H8.5" stroke="#cfcfcf" stroke-width="1"/></svg>
<div class="t" style="left:906.2px;top:407.6px;font-size:12px;color:#d8d8d8;font-weight:normal;letter-spacing:-0.4px;">12 px</div>
<div class="t" style="left:944px;top:408.2px;font-size:11px;color:#cfcfcf;font-weight:normal;letter-spacing:-0.3px;-webkit-text-stroke:0.25px #cfcfcf">B</div>
<svg class="b" style="left:957.5px;top:408.5px;" width="8" height="9" viewBox="0 0 8 9" fill="none"><path d="M3.2 0.6H7.4 M0.6 8.2H4.8 M5.3 0.6 L2.7 8.2" stroke="#cfcfcf" stroke-width="1"/></svg>
<svg class="b" style="left:810.8px;top:437.5px;" width="11" height="9" viewBox="0 0 11 9" fill="none"><rect x="0.6" y="0.6" width="9.8" height="6" rx="0.6" stroke="#cfcfcf" stroke-width="1"/><path d="M5.5 6.8V8.4 M3 8.4H8" stroke="#cfcfcf" stroke-width="1"/></svg>
<div class="t" style="left:825.9px;top:436.2px;font-size:11px;color:#d2d2d2;font-weight:normal;letter-spacing:-0.3px;">第一列宽度调整</div>
<svg class="b" style="left:905.2px;top:436.6px;" width="11" height="11" viewBox="0 0 11 11" fill="none"><circle cx="5.5" cy="5.5" r="4.8" stroke="#bdbdbd" stroke-width="0.9"/><path d="M5.5 4.6V8.3" stroke="#bdbdbd" stroke-width="1"/><circle cx="5.5" cy="3" r="0.6" fill="#bdbdbd"/></svg>
<div class="b" style="left:828.3px;top:459.2px;width:11px;height:11px;box-sizing:border-box;border:0.8px solid #4a7ad8;border-radius:50%;background:#27282c"></div>
<div class="b" style="left:830.5999999999999px;top:461.5px;width:6.4px;height:6.4px;background:#5b93f7;border-radius:50%"></div>
<div class="t" style="left:846.8px;top:459px;font-size:11px;color:#d2d2d2;font-weight:normal;letter-spacing:-0.3px;">按容器自适应</div>
<div class="b" style="left:828.3px;top:482.2px;width:11px;height:11px;box-sizing:border-box;border:1px solid #45464a;border-radius:50%;background:#2a2b2f"></div>
<div class="t" style="left:846.8px;top:482.4px;font-size:11px;color:#d2d2d2;font-weight:normal;letter-spacing:-0.3px;">自定义</div>
<div class="b" style="left:810.4px;top:505px;width:10.6px;height:10.6px;box-sizing:border-box;border:1px solid #45464a;border-radius:2px;background:#2a2b2f"></div>
<svg class="b" style="left:828.8px;top:506px;" width="11" height="9" viewBox="0 0 11 9" fill="none"><rect x="0.6" y="0.6" width="9.8" height="6" rx="0.6" stroke="#cfcfcf" stroke-width="1"/><path d="M5.5 6.8V8.4 M3 8.4H8" stroke="#cfcfcf" stroke-width="1"/></svg>
<div class="t" style="left:843.1px;top:505px;font-size:11px;color:#d2d2d2;font-weight:normal;letter-spacing:-0.3px;">表格高度动态自适应</div>
<svg class="b" style="left:944.7px;top:505px;" width="11" height="11" viewBox="0 0 11 11" fill="none"><circle cx="5.5" cy="5.5" r="4.8" stroke="#bdbdbd" stroke-width="0.9"/><path d="M5.5 4.6V8.3" stroke="#bdbdbd" stroke-width="1"/><circle cx="5.5" cy="3" r="0.6" fill="#bdbdbd"/></svg>
<div class="t" style="left:829.1px;top:533.3px;font-size:11px;color:#6f7074;font-weight:normal;letter-spacing:-0.3px;">最大高度</div>
<div class="b" style="left:879.4px;top:528.5px;width:58px;height:21px;box-sizing:border-box;border:1px solid #393a3e;border-radius:2px;background:#2d2e32"></div>
<div class="t" style="left:883.8px;top:533.5px;font-size:11px;color:#6f7074;font-weight:normal;letter-spacing:-0.3px;">672px</div>
<svg class="b" style="left:921.3px;top:537px;" width="7.5" height="4.5" viewBox="0 0 7.5 4.5" fill="none"><path d="M0 0H7L3.5 4Z" fill="#6f7074"/></svg>
<div class="b" style="left:800px;top:560px;width:212px;height:1px;background:#414246"></div>
<svg class="b" style="left:871px;top:464px;" width="15" height="16" viewBox="0 0 15 16" fill="none"><path d="M3.2 1.9 C3.2 0.2 6 0.2 6 1.9 V6.2 C6 5.2 8.4 5.2 8.4 6.2 V6.6 C8.4 5.6 10.8 5.6 10.8 6.6 V7 C10.8 6.2 13.6 6.2 13.6 7.4 V10.5 C13.6 13 12.2 14.6 10 14.6 H7.2 C5.8 14.6 5 14 4.2 13 L0.9 9.2 C0.2 8.3 1.5 7 2.4 7.8 L3.2 8.6 Z" fill="#ffffff" stroke="#141414" stroke-width="1" stroke-linejoin="round"/><path d="M7.2 9.2V12.6 M9.6 9.2V12.6 M12 9.2V12.6" stroke="#141414" stroke-width="0.9"/></svg>
</body></html>
